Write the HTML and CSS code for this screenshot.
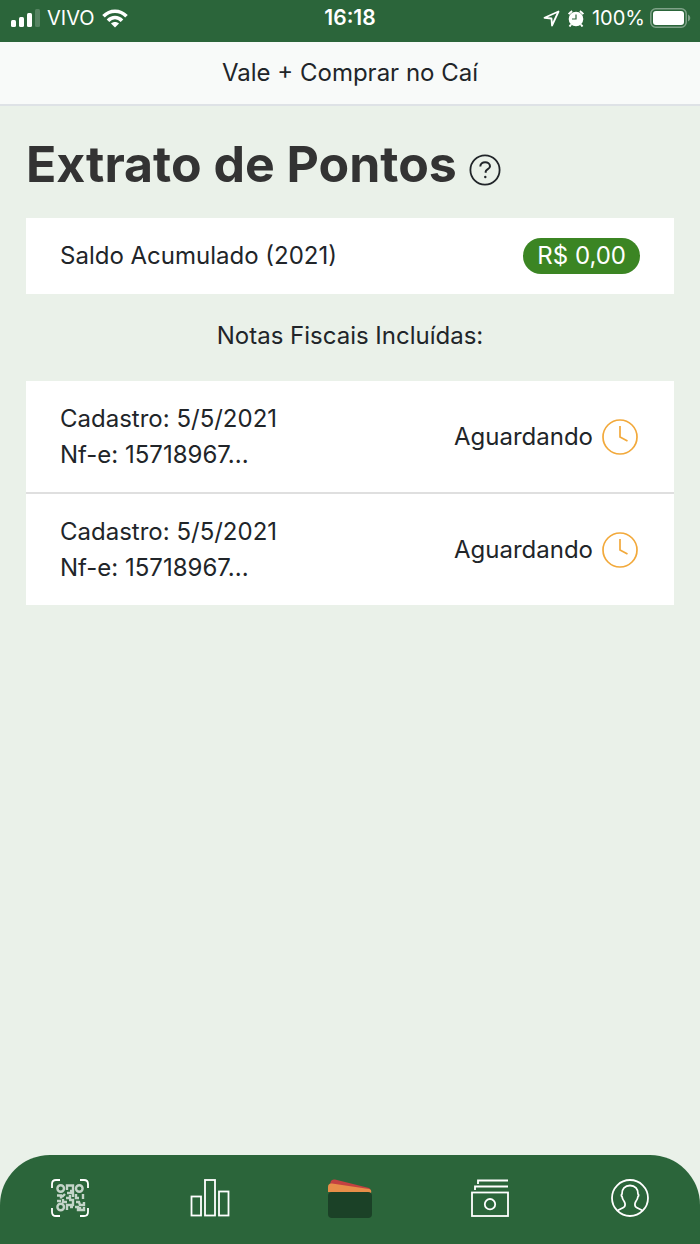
FILE: index.html
```html
<!DOCTYPE html>
<html lang="pt-BR">
<head>
<meta charset="utf-8">
<meta name="viewport" content="width=device-width, initial-scale=1">
<title>Extrato de Pontos</title>
<link rel="stylesheet" href="styles.css">
</head>
<body>
<div class="status-bar">
  <div class="status-group">
    <svg width="29" height="18" viewBox="0 0 29 18" fill="#fff" aria-hidden="true"><rect y="11" width="5" height="7" rx="1.5"/><rect x="8" y="8" width="5" height="10" rx="1.5"/><rect x="16" y="4" width="5" height="14" rx="1.5"/><rect x="24" width="5" height="18" rx="1.5" opacity=".2"/></svg>
    <span class="carrier">VIVO</span>
    <svg width="26" height="19" viewBox="0 0 26 19" fill="none" stroke="#fff" stroke-width="3.6" aria-hidden="true"><path d="M1.5 7.2C8 .5 18 .5 24.500 7.200"/><path d="M6 11.700c4-4.200 10-4.200 14 0"/><path d="M13 18.600l-4-4c2.300-2 5.700-2 8 0z" fill="#fff" stroke="none"/></svg>
  </div>
  <time class="clock">16:18</time>
  <div class="status-group status-right">
    <svg class="location" width="17" height="17" viewBox="0 0 17 17" fill="none" stroke="#fff" stroke-width="1.800" stroke-linejoin="round" aria-hidden="true"><path d="M15.500 1.500L1.500 7.800l7 .7.500 7z"/></svg>
    <svg class="alarm" width="16" height="17" viewBox="0 0 16 17" aria-hidden="true"><circle cx="8" cy="9" r="7.300" fill="#fff"/><path d="M.8 4.200a9 9 0 0 1 3.400-3M15.200 4.200a9 9 0 0 0-3.400-3M3 14.500l-1.500 2M13 14.500l1.500 2" stroke="#fff" stroke-width="2" fill="none"/><path d="M8 4.500V9H4" stroke="#2b653a" stroke-width="1.200" fill="none"/></svg>
    <span>100%</span>
    <svg width="41" height="20" viewBox="0 0 41 20" aria-hidden="true"><rect x=".8" y=".8" width="35.400" height="18.400" rx="5" fill="none" stroke="#fff" stroke-opacity=".4" stroke-width="1.500"/><rect x="3" y="3" width="31" height="14" rx="3" fill="#fff"/><path d="M38 6.500c3 1.500 3 5.500 0 7z" fill="#fff" opacity=".4"/></svg>
  </div>
</div>
<header class="app-header">Vale + Comprar no Caí</header>
<main class="content">
  <div class="title-row">
    <h1 class="title">Extrato de Pontos</h1>
    <button class="help" type="button" aria-label="Ajuda">
      <svg width="32" height="32" viewBox="0 0 32 32" fill="none" stroke="#212529" stroke-width="1.800" aria-hidden="true"><circle cx="16" cy="16" r="14.600"/><path d="M11.300 12.500c0-6 9.700-5.500 9.700-.3 0 3-4.300 3.300-4.300 5.300v1.300" stroke-width="2"/><circle cx="16.300" cy="23" r="1.200" fill="#212529" stroke="none"/></svg>
    </button>
  </div>
  <section class="balance">
    <span>Saldo Acumulado (2021)</span>
    <span class="badge">R$ 0,00</span>
  </section>
  <h2 class="subtitle">Notas Fiscais Incluídas:</h2>
  <ul class="invoices">
    <li class="invoice">
      <div>Cadastro: 5/5/2021<br>Nf-e: 15718967...</div>
      <div class="state">Aguardando
        <svg width="36" height="36" viewBox="0 0 36 36" fill="none" stroke="#f2a93b" stroke-width="1.700" aria-hidden="true"><circle cx="18" cy="18" r="17"/><path d="M18 7v11l7.500 4"/></svg>
      </div>
    </li>
    <li class="invoice">
      <div>Cadastro: 5/5/2021<br>Nf-e: 15718967...</div>
      <div class="state">Aguardando
        <svg width="36" height="36" viewBox="0 0 36 36" fill="none" stroke="#f2a93b" stroke-width="1.700" aria-hidden="true"><circle cx="18" cy="18" r="17"/><path d="M18 7v11l7.500 4"/></svg>
      </div>
    </li>
  </ul>
</main>
<nav class="tab-bar">
  <a class="tab" href="#qr" aria-label="Ler QR code">
    <svg width="38" height="38" viewBox="0 0 38 38" fill="none" stroke="#fff" aria-hidden="true"><path d="M1 9V5q0-4 4-4h4M29 1h4q4 0 4 4v4M37 29v4q0 4-4 4h-4M9 37H5q-4 0-4-4v-4" stroke-width="1.800"/><g opacity=".72" stroke-width="2.400"><circle cx="9.700" cy="9.500" r="3.300"/><circle cx="28.300" cy="9.500" r="3.300"/><circle cx="9.700" cy="28" r="3.300"/><path d="M16 11V6.500h6V12h-3M16 14h6v4M6 16.500h4v3M14 15l-3 3M15 19h4v-3M6 22h4M12 20v3h4M18 21h4v5h-6v5M19 28h3M25 15v4h3M32 15v5M25 23h3l1 3h4v-3M24 28h3v3h6v-3M29 30v-2"/></g></svg>
  </a>
  <a class="tab" href="#ranking" aria-label="Ranking">
    <svg width="40" height="38" viewBox="0 0 40 38" fill="none" stroke="#fff" stroke-width="1.800" aria-hidden="true"><rect x="1.500" y="17.500" width="9.500" height="19"/><rect x="15" y="1" width="10" height="35.500"/><rect x="29" y="12.500" width="9.500" height="24"/></svg>
  </a>
  <a class="tab" href="#carteira" aria-label="Carteira">
    <svg width="44" height="40" viewBox="0 0 44 40" aria-hidden="true"><path d="M2 6l1-3q1-2 4-1.500L41 10q2 1 2 5L4 12z" fill="#c44141"/><path d="M0 14V9q0-4 4-3.500L41 11q3 .5 2 4z" fill="#e88e49"/><rect y="14" width="44" height="26" rx="4" fill="#1b4127"/></svg>
  </a>
  <a class="tab" href="#extrato" aria-label="Extrato">
    <svg width="38" height="38" viewBox="0 0 38 38" fill="none" stroke="#fff" stroke-width="1.800" aria-hidden="true"><path d="M7 5V1.500h30M4 11V7.500h33"/><rect x="1" y="13.500" width="36" height="23.500"/><circle cx="19" cy="25.200" r="5.200"/></svg>
  </a>
  <a class="tab" href="#perfil" aria-label="Perfil">
    <svg width="38" height="38" viewBox="0 0 38 38" fill="none" stroke="#fff" stroke-width="1.800" stroke-linejoin="round" aria-hidden="true"><circle cx="19" cy="19" r="18"/><path d="M6.500 31.500l6-3c2-1 2-4 .7-6-1.700-2-2-3.500-2.200-5-.8-.6-.8-2 0-2.500-.3-5 3-8.500 8-8.500s8.300 3.500 8 8.500c.8.500.8 1.900 0 2.500-.2 1.500-.5 3-2.200 5-1.300 2-1.300 5 .7 6l6 3"/></svg>
  </a>
</nav>
</body>
</html>
```
FILE: styles.css
```css
* { box-sizing: border-box; }

body {
  margin: 0;
  min-height: 100vh;
  display: flex;
  flex-direction: column;
  background: #eaf1e9;
  color: #212529;
  font-family: Inter, "Liberation Sans", sans-serif;
  font-size: 24px;
  line-height: 36px;
}

svg { display: block; flex: none; }

.status-bar {
  display: grid;
  grid-template-columns: 1fr auto 1fr;
  align-items: center;
  height: 42px;
  padding: 0 9px 6px;
  background: #2b653a;
  color: #fff;
  font-size: 20px;
}

.status-group {
  display: flex;
  align-items: center;
  gap: 7px;
  padding-left: 2px;
}

.status-right {
  justify-content: flex-end;
  gap: 5px;
}

.alarm { margin: 0 3px; }

.clock {
  font-size: 21px;
  font-weight: 600;
}

.app-header {
  height: 64px;
  padding: 13px 24px;
  border-bottom: 2px solid #dee2e6;
  background: #f8faf9;
  text-align: center;
}

.content {
  flex: 1;
  padding: 26px 26px 40px;
}

.title-row {
  display: flex;
  align-items: center;
  gap: 12px;
}

.title {
  margin: 0;
  color: #333;
  font-size: 50px;
  font-weight: 700;
  line-height: 64px;
}

.help {
  margin: 12px 0 0;
  padding: 0;
  border: 0;
  background: none;
}

.balance {
  display: flex;
  align-items: center;
  justify-content: space-between;
  margin-top: 22px;
  padding: 20px 34px;
  background: #fff;
}

.badge {
  padding: 0 14px;
  border-radius: 18px;
  background: #3b8523;
  color: #fff;
}

.subtitle {
  margin: 24px 0 27px;
  font-size: 24px;
  font-weight: 400;
  text-align: center;
}

.invoices {
  margin: 0;
  padding: 0;
  list-style: none;
  background: #fff;
}

.invoice {
  display: flex;
  align-items: center;
  justify-content: space-between;
  padding: 20px 36px 19px 34px;
}

.invoice + .invoice { border-top: 2px solid #dfdfdf; }

.state {
  display: flex;
  align-items: center;
  gap: 9px;
}

.tab-bar {
  display: grid;
  grid-template-columns: repeat(5, 1fr);
  height: 89px;
  padding-bottom: 4px;
  border-radius: 50px 50px 0 0;
  background: #2b653a;
}

.tab {
  display: flex;
  align-items: center;
  justify-content: center;
}
```
